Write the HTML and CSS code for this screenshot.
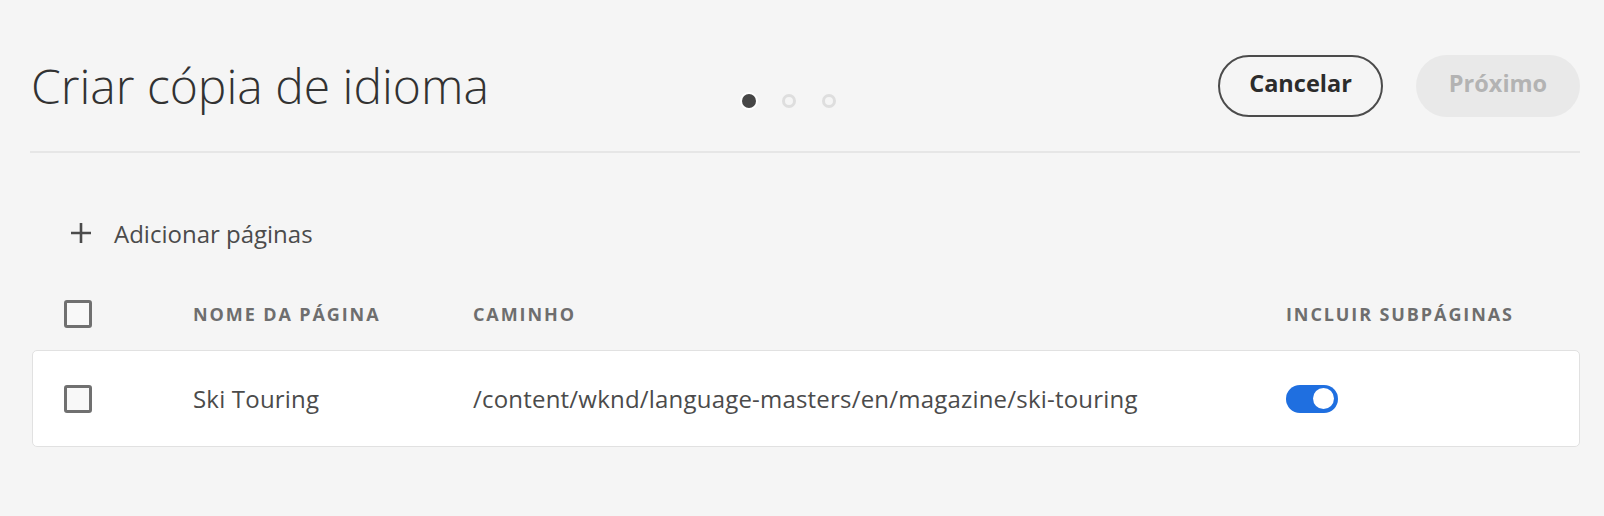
FILE: index.html
```html
<!DOCTYPE html>
<html lang="pt">
<head>
<meta charset="utf-8">
<title>Criar cópia de idioma</title>
<link rel="stylesheet" href="styles.css">
</head>
<body>
<div class="page">
  <header class="header">
    <h1 class="title">Criar cópia de idioma</h1>
    <div class="steps">
      <span class="dot active"></span>
      <span class="dot"></span>
      <span class="dot"></span>
    </div>
    <div class="actions">
      <button class="btn btn-outline">Cancelar</button>
      <button class="btn btn-disabled" disabled>Próximo</button>
    </div>
  </header>
  <div class="divider"></div>

  <button class="add">
    <svg class="plus" width="22" height="22" viewBox="0 0 22 22"><path d="M11 1v20M1 11h20" stroke="#4b4b4b" stroke-width="2.6" fill="none"/></svg>
    <span>Adicionar páginas</span>
  </button>

  <div class="table">
    <div class="thead">
      <span class="check"></span>
      <span class="th">Nome da página</span>
      <span class="th">Caminho</span>
      <span class="th">Incluir subpáginas</span>
    </div>
    <div class="row">
      <span class="check"></span>
      <span class="td">Ski Touring</span>
      <span class="td">/content/wknd/language-masters/en/magazine/ski-touring</span>
      <span class="td"><span class="toggle"><span class="knob"></span></span></span>
    </div>
  </div>
</div>
</body>
</html>
```

FILE: styles.css
```css
html, body {
  margin: 0;
  background: #f5f5f5;
}
body {
  font-family: "Open Sans", "Noto Sans", sans-serif;
  color: #4b4b4b;
}
.page {
  padding: 0 24px 0 30px;
}
.header {
  display: grid;
  grid-template-columns: 712px auto 1fr;
  align-items: center;
  padding-top: 55px;
  height: 62px;
}
.title {
  margin: 0;
  font-weight: 300;
  font-size: 48px;
  line-height: 62px;
  color: #323232;
  letter-spacing: 0;
  padding-left: 1px;
}
.steps {
  display: flex;
  gap: 26px;
  margin-top: 30px;
  align-self: center;
}
.dot {
  width: 14px;
  height: 14px;
  box-sizing: border-box;
  border-radius: 50%;
  border: 3px solid #dedede;
}
.dot.active {
  background: #464646;
  border: none;
  box-shadow: 0 0 0 2px #fff;
}
.actions {
  display: flex;
  justify-content: flex-end;
  gap: 33px;
}
.btn {
  font-family: inherit;
  font-weight: 700;
  font-size: 23.5px;
  line-height: 1;
  height: 62px;
  border-radius: 31px;
  box-sizing: border-box;
  padding: 0 0 4px;
}
.btn-outline {
  width: 165px;
  background: transparent;
  border: 2.5px solid #4b4b4b;
  color: #2c2c2c;
}
.btn-disabled {
  width: 164px;
  background: #e9e9e9;
  border: none;
  color: #b3b3b3;
}
.divider {
  margin-top: 34px;
  height: 2px;
  background: #e6e6e6;
}
.add {
  display: flex;
  align-items: center;
  gap: 22px;
  margin: 69px 0 0 40px;
  padding: 0;
  border: none;
  background: none;
  font-family: inherit;
  font-size: 24px;
  color: #4b4b4b;
  height: 22px;
}
.plus {
  display: block;
}
.table {
  margin-top: 55px;
  padding-left: 2px;
}
.thead, .row {
  display: grid;
  grid-template-columns: 129px 280px 813px 1fr;
  align-items: center;
}
.thead {
  padding-left: 32px;
  height: 30px;
}
.th {
  font-size: 18px;
  font-weight: 700;
  text-transform: uppercase;
  letter-spacing: 1.9px;
  color: #6e6e6e;
}
.row {
  margin-top: 21px;
  height: 95px;
  padding-left: 31px;
  background: #fff;
  border: 1px solid #e1e1e1;
  border-radius: 5px;
}
.td {
  font-size: 24px;
  letter-spacing: 0.2px;
  color: #4b4b4b;
}
.check {
  display: block;
  width: 28px;
  height: 28px;
  box-sizing: border-box;
  border: 3px solid #707070;
  border-radius: 3px;
  background: #f8f8f8;
}
.toggle {
  display: flex;
  justify-content: flex-end;
  align-items: center;
  width: 52px;
  height: 28px;
  box-sizing: border-box;
  padding-right: 4px;
  border-radius: 14px;
  background: #1f6fe0;
}
.knob {
  width: 21px;
  height: 21px;
  border-radius: 50%;
  background: #fff;
}
```
